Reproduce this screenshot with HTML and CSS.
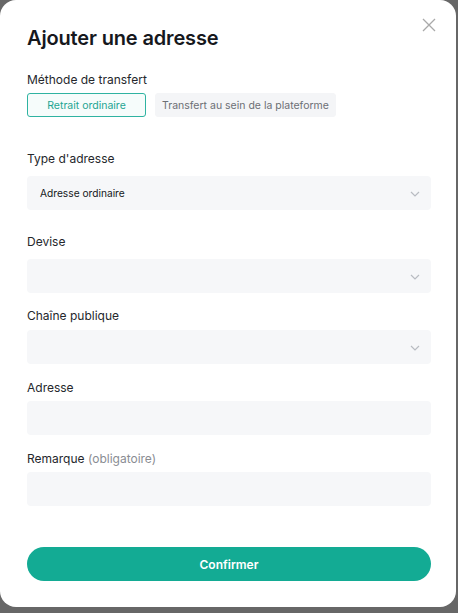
FILE: index.html
```html
<!DOCTYPE html>
<html lang="fr">
<head>
<meta charset="utf-8">
<title>Ajouter une adresse</title>
<link rel="stylesheet" href="styles.css">
</head>
<body>
<div class="modal">
  <div class="modal-header">
    <h1 class="title">Ajouter une adresse</h1>
    <button class="close" aria-label="Fermer">
      <svg width="14" height="14" viewBox="0 0 14 14"><path d="M1 1L13 13M13 1L1 13" stroke="#a9a9a9" stroke-width="1.3" fill="none"/></svg>
    </button>
  </div>

  <div class="section-method">
    <div class="label">Méthode de transfert</div>
    <div class="tabs">
      <button class="tab tab-active">Retrait ordinaire</button>
      <button class="tab">Transfert au sein de la plateforme</button>
    </div>
  </div>

  <div class="field field-type">
    <div class="label">Type d'adresse</div>
    <div class="select">
      <span class="value">Adresse ordinaire</span>
      <svg class="chev" width="10" height="6" viewBox="0 0 10 6"><path d="M1 1L5 5L9 1" stroke="#b8bcc2" stroke-width="1.2" fill="none"/></svg>
    </div>
  </div>

  <div class="field field-devise">
    <div class="label">Devise</div>
    <div class="select">
      <span class="value"></span>
      <svg class="chev" width="10" height="6" viewBox="0 0 10 6"><path d="M1 1L5 5L9 1" stroke="#b8bcc2" stroke-width="1.2" fill="none"/></svg>
    </div>
  </div>

  <div class="field field-chain">
    <div class="label">Chaîne publique</div>
    <div class="select">
      <span class="value"></span>
      <svg class="chev" width="10" height="6" viewBox="0 0 10 6"><path d="M1 1L5 5L9 1" stroke="#b8bcc2" stroke-width="1.2" fill="none"/></svg>
    </div>
  </div>

  <div class="field field-address">
    <div class="label">Adresse</div>
    <div class="input"></div>
  </div>

  <div class="field field-remark">
    <div class="label">Remarque <span class="hint">(obligatoire)</span></div>
    <div class="input"></div>
  </div>

  <button class="confirm">Confirmer</button>
</div>
</body>
</html>
```
FILE: styles.css
```css
* { box-sizing: border-box; }
html, body { margin: 0; padding: 0; }
body {
  background: #676767;
  font-family: Inter, "Noto Sans", "Liberation Sans", sans-serif;
  color: #1f2126;
  width: 458px;
  height: 613px;
  overflow: hidden;
}
.modal {
  width: 456px;
  height: 607px;
  background: #ffffff;
  border-radius: 16px;
  padding: 0 25px 0 27px;
  display: flex;
  flex-direction: column;
}
.modal-header {
  display: flex;
  justify-content: space-between;
  align-items: flex-start;
  padding-top: 26px;
}
.title {
  margin: 0;
  font-size: 20px;
  line-height: 24px;
  font-weight: 600;
  color: #16181d;
  letter-spacing: -0.15px;
}
.close {
  border: 0;
  background: none;
  padding: 0;
  margin: -8px -5px 0 0;
  width: 14px;
  height: 14px;
  display: flex;
}
.label {
  font-size: 12px;
  line-height: 18px;
  color: #25272c;
}
.hint { color: #8a8d93; }
.section-method { margin-top: 21px; }
.tabs {
  display: flex;
  gap: 9px;
  margin-top: 4px;
}
.tab {
  font-family: inherit;
  font-size: 10.5px;
  height: 24px;
  padding: 0 6px;
  border-radius: 3px;
  border: 1px solid #f4f5f7;
  background: #f4f5f7;
  color: #6c6f75;
}
.tab-active {
  width: 119px;
  border-color: #2fb3a1;
  background: #f6fcfb;
  color: #1ea592;
}
.field { display: flex; flex-direction: column; }
.field-type { margin-top: 33px; gap: 8px; }
.field-devise { margin-top: 23px; gap: 8px; }
.field-chain { margin-top: 14px; gap: 5px; }
.field-address { margin-top: 15px; gap: 4px; }
.field-remark { margin-top: 15px; gap: 4px; }
.select, .input {
  height: 34px;
  background: #f6f7f9;
  border-radius: 4px;
}
.select {
  display: flex;
  align-items: center;
  justify-content: space-between;
  padding: 0 11px 0 13px;
}
.value { font-size: 10.2px; color: #15171b; font-weight: 400; }
.chev { margin-top: 1px; }
.confirm {
  margin-top: 41px;
  height: 34px;
  border: 0;
  border-radius: 17px;
  background: #13ab94;
  color: #ffffff;
  font-family: inherit;
  font-size: 12px;
  font-weight: 600;
}
```
